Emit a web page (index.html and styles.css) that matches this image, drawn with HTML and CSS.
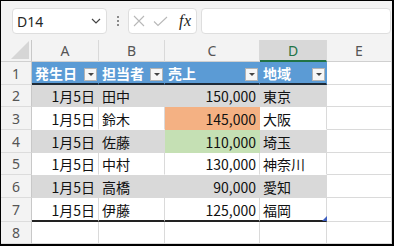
FILE: index.html
```html
<!DOCTYPE html>
<html lang="ja">
<head>
<meta charset="utf-8">
<link rel="stylesheet" href="styles.css">
</head>
<body>
<div class="frame">
  <div class="toolbar">
    <div class="namebox"><span>D14</span>
      <svg class="chev" width="10" height="6" viewBox="0 0 10 6"><path d="M1 1 L5 5 L9 1" fill="none" stroke="#444" stroke-width="1.2"/></svg>
    </div>
    <div class="grip"><i></i><i></i><i></i></div>
    <div class="fxbtns">
      <svg width="12" height="12" viewBox="0 0 12 12"><path d="M1 1 L11 11 M11 1 L1 11" stroke="#b8b8b8" stroke-width="1.1" fill="none"/></svg>
      <svg width="15" height="11" viewBox="0 0 15 11"><path d="M1 5.5 L5 9.5 L14 1" stroke="#b8b8b8" stroke-width="1.1" fill="none"/></svg>
      <span class="fx">fx</span>
    </div>
    <div class="formula"></div>
  </div>
  <div class="sheet">
    <div class="corner"><svg width="18" height="18" viewBox="0 0 18 18"><path d="M18 0 L18 18 L0 18 Z" fill="#d6d6d6"/></svg></div>
    <div class="ch">A</div><div class="ch">B</div><div class="ch">C</div><div class="ch sel">D</div><div class="ch">E</div>

    <div class="rh">1</div>
    <div class="c th"><span>発生日</span><b class="flt"></b></div>
    <div class="c th"><span>担当者</span><b class="flt"></b></div>
    <div class="c th"><span>売上</span><b class="flt"></b></div>
    <div class="c th"><span>地域</span><b class="flt"></b></div>
    <div class="c"></div>

    <div class="rh">2</div>
    <div class="c g r">1月5日</div><div class="c g">田中</div><div class="c g r">150,000</div><div class="c g">東京</div><div class="c"></div>

    <div class="rh">3</div>
    <div class="c w r">1月5日</div><div class="c w">鈴木</div><div class="c w r orange">145,000</div><div class="c w">大阪</div><div class="c"></div>

    <div class="rh">4</div>
    <div class="c g r">1月5日</div><div class="c g">佐藤</div><div class="c g r green">110,000</div><div class="c g">埼玉</div><div class="c"></div>

    <div class="rh">5</div>
    <div class="c w r">1月5日</div><div class="c w">中村</div><div class="c w r">130,000</div><div class="c w">神奈川</div><div class="c"></div>

    <div class="rh">6</div>
    <div class="c g r">1月5日</div><div class="c g">高橋</div><div class="c g r">90,000</div><div class="c g">愛知</div><div class="c"></div>

    <div class="rh">7</div>
    <div class="c w last r">1月5日</div><div class="c w last">伊藤</div><div class="c w last r">125,000</div><div class="c w last end">福岡<i class="handle"></i></div><div class="c"></div>

    <div class="rh">8</div>
    <div class="c"></div><div class="c"></div><div class="c"></div><div class="c"></div><div class="c"></div>
  </div>
</div>
</body>
</html>
```
FILE: styles.css
```css
html, body {
  margin: 0;
  padding: 0;
  background: #fff;
}

.frame {
  width: 394px;
  height: 246px;
  box-sizing: border-box;
  border-style: solid;
  border-color: #000;
  border-width: 1px 2px 2px 1px;
  background: #f3f3f3;
  display: flex;
  flex-direction: column;
  overflow: hidden;
}

.toolbar {
  height: 39px;
  flex: none;
  box-sizing: border-box;
  padding: 7px 1px 0 11px;
  display: flex;
  align-items: flex-start;
}

.namebox {
  width: 95px;
  height: 26px;
  box-sizing: border-box;
  border: 1px solid #dedede;
  border-radius: 4px;
  background: #fff;
  display: flex;
  align-items: center;
  justify-content: space-between;
  padding: 0 5px 0 4px;
  font: 14px "Noto Sans", "Liberation Sans", sans-serif;
  color: #262626;
}

.grip {
  width: 21px;
  height: 26px;
  display: flex;
  flex-direction: column;
  align-items: center;
  justify-content: center;
  gap: 2px;
}

.grip i {
  width: 2px;
  height: 2px;
  background: #8a8a8a;
  display: block;
}

.fxbtns {
  width: 69px;
  height: 26px;
  box-sizing: border-box;
  border: 1px solid #dedede;
  border-radius: 4px;
  background: #fff;
  display: flex;
  align-items: center;
  padding-left: 4px;
  gap: 8px;
}

.fx {
  font: italic 16px "Liberation Serif", "DejaVu Serif", serif;
  color: #222;
  margin-left: 3px;
  letter-spacing: 0.5px;
}

.formula {
  flex: 1;
  margin-left: 4px;
  height: 26px;
  box-sizing: border-box;
  border: 1px solid #dedede;
  border-radius: 4px;
  background: #fff;
}

.sheet {
  flex: 1;
  display: grid;
  grid-template-columns: 31px 67px 66px 95px 67px 65px;
  grid-template-rows: 22px 23px 22px 23px 23px 22px 23px 24px 22px;
  background: #fff;
}

.corner {
  background: #f3f3f3;
  border-right: 1px solid #c8c8c8;
  border-bottom: 1px solid #d0d0d0;
  display: flex;
  align-items: flex-end;
  justify-content: flex-end;
  padding: 0 2px 2px 0;
  box-sizing: border-box;
}

.ch {
  background: #f3f3f3;
  border-right: 1px solid #d9d9d9;
  border-bottom: 1px solid #d0d0d0;
  box-sizing: border-box;
  display: flex;
  align-items: center;
  justify-content: center;
  font: 14px "Noto Sans", "Liberation Sans", sans-serif;
  color: #555;
}

.ch.sel {
  background: #d8d8d8;
  color: #217346;
  border-bottom: 2px solid #217346;
}

.rh {
  background: #f3f3f3;
  border-right: 1px solid #c8c8c8;
  border-bottom: 1px solid #dcdcdc;
  box-sizing: border-box;
  display: flex;
  align-items: center;
  justify-content: center;
  font: 14px "Noto Sans", "Liberation Sans", sans-serif;
  color: #555;
}

.c {
  box-sizing: border-box;
  border-right: 1px solid #dadada;
  border-bottom: 1px solid #dadada;
  display: flex;
  align-items: center;
  padding: 1px 3px 0 3px;
  font: 14px "Noto Sans CJK JP", "Noto Sans", sans-serif;
  color: #111;
  white-space: nowrap;
  position: relative;
}

.c.r {
  justify-content: flex-end;
  padding-right: 3px;
}

.c.th {
  background: #5b9bd5;
  border-right-color: #5b9bd5;
  border-bottom: 2px solid #1e2a36;
  color: #fff;
  font-weight: bold;
  justify-content: space-between;
  padding: 0 1px 0 3px;
}

.flt {
  width: 13px;
  height: 13px;
  box-sizing: border-box;
  background: #f6f6f6;
  border: 1px solid #b4b4b4;
  display: flex;
  align-items: center;
  justify-content: center;
  margin-top: 3px;
}

.flt::after {
  content: "";
  border-left: 3px solid transparent;
  border-right: 3px solid transparent;
  border-top: 3px solid #444;
  margin-top: 1px;
}

.c.g {
  background: #d9d9d9;
  border-color: #d9d9d9;
}

.c.w {
  border-bottom-color: #fff;
}

.c.orange {
  background: #f4b183;
  border-color: #f4b183;
}

.c.green {
  background: #c5e0b4;
  border-color: #c5e0b4;
}

.c.last {
  border-bottom: 2px solid #222;
}

.handle {
  position: absolute;
  right: -1px;
  bottom: -1px;
  width: 0;
  height: 0;
  border-left: 5px solid transparent;
  border-bottom: 5px solid #3f5fbf;
}
```
